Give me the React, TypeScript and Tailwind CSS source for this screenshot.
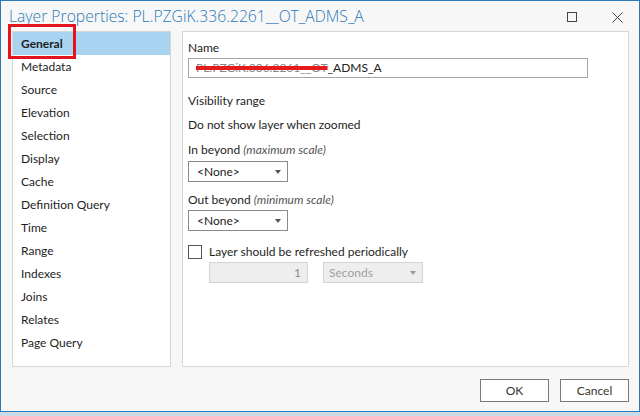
const NAV = [
  'General',
  'Metadata',
  'Source',
  'Elevation',
  'Selection',
  'Display',
  'Cache',
  'Definition Query',
  'Time',
  'Range',
  'Indexes',
  'Joins',
  'Relates',
  'Page Query',
];

function Caret({ color = '#444' }: { color?: string }) {
  return (
    <svg width="6" height="4" viewBox="0 0 6 4" className="shrink-0">
      <path d="M0 0 L6 0 L3 4 Z" fill={color} />
    </svg>
  );
}

function Dropdown({ value, disabled = false }: { value: string; disabled?: boolean }) {
  return (
    <div
      className={
        disabled
          ? 'w-[100px] h-[21px] flex items-center justify-between pl-[5px] pr-[6px] border border-[#d4d4d4] bg-[#eeeeee] text-[#a0a0a0]'
          : 'w-[100px] h-[21px] flex items-center justify-between pl-[8px] pr-[6px] border border-[#8a8a8a] bg-white text-[#222]'
      }
    >
      <span>{value}</span>
      <Caret color={disabled ? '#999' : '#555'} />
    </div>
  );
}

export default function App() {
  return (
    <div className="w-[640px] h-[416px] bg-[#c9d9e6] overflow-hidden font-['Lato','Open_Sans',sans-serif]">
      <div className="relative w-[640px] h-[412px] border border-[#2a7ab8] bg-[#f7f7f7] flex flex-col text-[12px] text-[#1e1e1e]">
        {/* title bar */}
        <div className="h-[30px] flex items-center pl-[8px] pr-[16px] pt-[2px]">
          <span className="font-['Open_Sans',sans-serif] text-[15.7px] font-light text-[#2b78b6]">Layer Properties: PL.PZGiK.336.2261__OT_ADMS_A</span>
          <div className="ml-auto flex items-center gap-[35px]">
            <svg width="10" height="10" viewBox="0 0 10 10">
              <rect x="0.5" y="0.5" width="9" height="9" fill="none" stroke="#444" strokeWidth="1" />
            </svg>
            <svg width="11" height="11" viewBox="0 0 11 11">
              <path d="M0.5 0.5 L10.5 10.5 M10.5 0.5 L0.5 10.5" stroke="#444" strokeWidth="1" />
            </svg>
          </div>
        </div>

        {/* body */}
        <div className="flex gap-[11px] pl-[11px] pr-[10px]">
          <div className="w-[159px] h-[336px] border border-[#d6d6d6] bg-white">
            {NAV.map((item, i) => (
              <div
                key={item}
                className={
                  i === 0
                    ? 'h-[23px] flex items-center pl-[8px] bg-[#a8d3f1] font-bold'
                    : 'h-[23px] flex items-center pl-[8px]'
                }
              >
                {item}
              </div>
            ))}
          </div>

          <div className="flex-1 h-[336px] border border-[#d6d6d6] bg-white pl-[5px] pt-[8px]">
            <div className="leading-[16px]">Name</div>
            <div className="mt-[2px] w-[400px] h-[20px] border border-[#a6a6a6] flex items-center pl-[7px]">
              <span className="line-through decoration-[#e31b1b] decoration-[4px] text-[#888]">PL.PZGiK.336.2261__OT</span>
              <span className="text-[#222]">_ADMS_A</span>
            </div>
            <div className="mt-[15px] leading-[16px]">Visibility range</div>
            <div className="mt-[8px] leading-[16px]">Do not show layer when zoomed</div>
            <div className="mt-[9px] leading-[16px]">
              In beyond <span className="italic text-[#555]">(maximum scale)</span>
            </div>
            <div className="mt-[3px]">
              <Dropdown value="<None>" />
            </div>
            <div className="mt-[10px] leading-[16px]">
              Out beyond <span className="italic text-[#555]">(minimum scale)</span>
            </div>
            <div className="mt-[2px]">
              <Dropdown value="<None>" />
            </div>
            <div className="mt-[12px] flex items-center gap-[7px]">
              <div className="w-[14px] h-[14px] border border-[#555] bg-white" />
              <span>Layer should be refreshed periodically</span>
            </div>
            <div className="mt-[1px] pl-[21px] flex items-center gap-[15px]">
              <div className="w-[99px] h-[21px] border border-[#d4d4d4] bg-[#eeeeee] text-[#8a8a8a] flex items-center justify-end pr-[6px]">1</div>
              <Dropdown value="Seconds" disabled />
            </div>
          </div>
        </div>

        {/* footer */}
        <div className="flex justify-end gap-[11px] pr-[10px] pt-[12px]">
          <button className="w-[69px] h-[23px] border border-[#7a7a7a] bg-white text-[#333]">OK</button>
          <button className="w-[69px] h-[23px] border border-[#7a7a7a] bg-white text-[#333]">Cancel</button>
        </div>

        {/* highlight box drawn over the tab list */}
        <div className="absolute left-[7px] top-[23px] w-[68px] h-[35px] border-[3px] border-[#e3141c]" />
      </div>
    </div>
  );
}
